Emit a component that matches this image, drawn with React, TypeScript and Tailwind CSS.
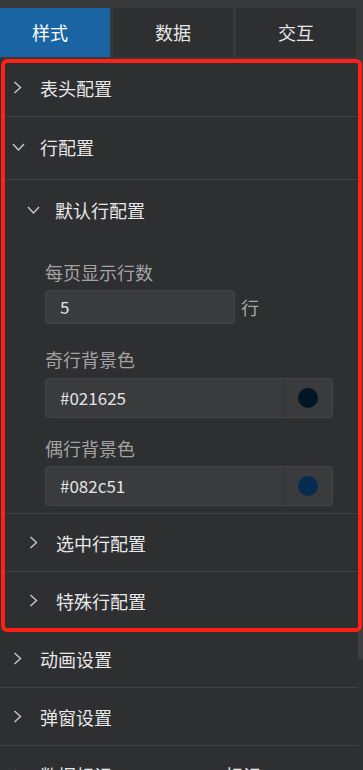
import React from "react";

const FONT = { fontFamily: '"Noto Sans CJK SC", "Noto Sans", sans-serif' };

function ChevronRight() {
  return (
    <svg width="9" height="13" viewBox="0 0 9 13" fill="none" className="shrink-0">
      <polyline points="1.5,1 7.5,6.5 1.5,12" stroke="#c9c9c9" strokeWidth="1.4" />
    </svg>
  );
}

function ChevronDown() {
  return (
    <svg width="13" height="8" viewBox="0 0 13 8" fill="none" className="shrink-0">
      <polyline points="1,1 6.5,7 12,1" stroke="#c9c9c9" strokeWidth="1.4" />
    </svg>
  );
}

function Row({ title, nested = false }: { title: string; nested?: boolean }) {
  return (
    <div
      className={`flex h-[58px] items-center border-b border-[#404143] ${
        nested ? "pl-[29px]" : "pl-[13px]"
      }`}
    >
      <span className="flex w-[18px] justify-start">
        <ChevronRight />
      </span>
      <span className="ml-[9px] text-[18px] leading-6 text-[#e8e8e8]">{title}</span>
    </div>
  );
}

function ColorField({ value, color }: { value: string; color: string }) {
  return (
    <div className="flex h-[40px] w-[288px] rounded-[4px] border border-[#444547] bg-[#3a3b3c]">
      <div className="flex flex-1 items-center pl-[14px] text-[17px] text-[#e4e4e4]">{value}</div>
      <div className="flex w-[49px] items-center justify-center border-l border-[#303133]">
        <span className="h-[20px] w-[20px] rounded-full" style={{ backgroundColor: color }} />
      </div>
    </div>
  );
}

export default function App() {
  return (
    <div className="relative h-[770px] w-[363px] overflow-hidden bg-[#2e2f31]" style={FONT}>
      {/* tabs */}
      <div className="flex gap-[3px] bg-[#38393b] pt-2 pb-[2px]">
        <div className="flex h-[49px] w-[110px] items-center justify-center bg-[#1a64a4] pr-[10px] text-[18px] text-white">
          样式
        </div>
        <div className="flex h-[49px] w-[120px] items-center justify-center bg-[#2e2f31] text-[18px] text-[#e6e6e6]">
          数据
        </div>
        <div className="flex h-[49px] w-[120px] items-center justify-center bg-[#2e2f31] text-[18px] text-[#e6e6e6]">
          交互
        </div>
      </div>

      <div className="flex">
        <div className="w-[358px]">
          <Row title="表头配置" />

          <div className="flex h-[63px] items-center border-b border-[#404143] pb-[3px] pl-[12px]">
            <span className="flex w-[19px]">
              <ChevronDown />
            </span>
            <span className="ml-[9px] text-[18px] leading-6 text-[#e8e8e8]">行配置</span>
          </div>

          {/* 默认行配置 */}
          <div className="border-b border-[#404143] pb-[7px]">
            <div className="flex h-[60px] items-center pl-[27px]">
              <span className="flex w-[19px]">
                <ChevronDown />
              </span>
              <span className="ml-[9px] text-[18px] leading-6 text-[#e8e8e8]">默认行配置</span>
            </div>
            <div className="pl-[45px]">
              <div className="mt-[20px] text-[18px] leading-6 text-[#a3a3a3]">每页显示行数</div>
              <div className="mt-[6px] flex h-[34px] items-center">
                <div className="flex h-[34px] w-[190px] items-center rounded-[4px] border border-[#444547] bg-[#3a3b3c] pl-[14px] text-[17px] text-[#e4e4e4]">
                  5
                </div>
                <span className="ml-[6px] text-[18px] text-[#a8a8a8]">行</span>
              </div>

              <div className="mt-[23px] text-[18px] leading-6 text-[#a3a3a3]">奇行背景色</div>
              <div className="mt-[7px]">
                <ColorField value="#021625" color="#021625" />
              </div>

              <div className="mt-[18px] text-[18px] leading-6 text-[#a3a3a3]">偶行背景色</div>
              <div className="mt-[6px]">
                <ColorField value="#082c51" color="#082c51" />
              </div>
            </div>
          </div>

          <Row title="选中行配置" nested />
          <Row title="特殊行配置" nested />
          <Row title="动画设置" />
          <Row title="弹窗设置" />
          <div className="flex h-[58px] items-center pl-[13px]">
            <span className="flex w-[18px]">
              <ChevronRight />
            </span>
            <span className="ml-[9px] text-[18px] leading-6 text-[#e8e8e8]">数据标记</span>
            <span className="ml-[113px] text-[18px] leading-6 text-[#e8e8e8]">标记</span>
          </div>
        </div>

        {/* scrollbar */}
        <div className="w-[5px]">
          <div className="h-[601px] rounded-b-[3px] bg-[#3d3e40]" />
        </div>
      </div>

      {/* highlight annotation */}
      <div className="pointer-events-none absolute top-[59px] left-[1px] h-[573px] w-[361px] rounded-[6px] border-[4px] border-[#ff2117]" />
    </div>
  );
}
